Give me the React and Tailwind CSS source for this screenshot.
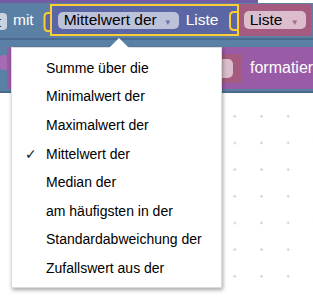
import React from "react";

const ITEMS = [
  "Summe über die",
  "Minimalwert der",
  "Maximalwert der",
  "Mittelwert der",
  "Median der",
  "am häufigsten in der",
  "Standardabweichung der",
  "Zufallswert aus der",
];
const SELECTED = 3;

function GridDots() {
  return (
    <svg className="absolute inset-0" width="313" height="298">
      <defs>
        <pattern id="dots" width="26.667" height="26.667" x="8.2" y="-3.7" patternUnits="userSpaceOnUse">
          <path d="M11.8 13.3h3M13.3 11.8v3" stroke="#cfcfcf" strokeWidth="1" />
        </pattern>
      </defs>
      <rect width="313" height="298" fill="url(#dots)" />
    </svg>
  );
}

function Arrow({ color }) {
  return <span className="text-[8px] leading-none" style={{ color }}>▼</span>;
}

export default function App() {
  return (
    <div className="relative w-[313px] h-[298px] overflow-hidden bg-white font-['Liberation_Sans',Arial,sans-serif]">
      <GridDots />

      <div className="relative">
        {/* top strip */}
        <div className="flex h-[3px]">
          <div className="w-[258px] bg-[#745ba5]" />
        </div>

        <div className="bg-[#5b80a5]">
          {/* row 1 */}
          <div className="flex items-start h-[35px]">
            <div className="mt-[10px] w-[7px] h-[17px] bg-[#c8d3df] rounded-r-[4px] overflow-hidden flex text-[15px] leading-[17px] text-[#2a3b5a]">
              <span className="-ml-[3px]">t</span>
            </div>
            <span className="ml-[6px] mt-[7px] text-[15.5px] leading-[20px] text-white">mit</span>

            {/* math block with yellow outline */}
            <div className="relative ml-[9px] mt-[1px] flex">
              <svg width="8" height="20" className="mt-[8px] -mr-[1px]">
                <path d="M8 1H5Q1.5 1 1.5 5v10Q1.5 19 5 19h3" fill="#5b67a5" stroke="#fc3" strokeWidth="2" />
              </svg>
              <div className="w-[189px] h-[32px] border-2 border-[#fc3] bg-[#5b67a5] flex items-center pl-[6px]">
                <div className="w-[121px] h-[17px] rounded-[5px] bg-[#bdc2db] flex items-center pl-[6px] pr-[7px] text-[15.5px] text-black leading-none">
                  <span>Mittelwert der</span>
                  <span className="ml-auto"><Arrow color="#6c74a8" /></span>
                </div>
                <span className="ml-[7px] text-[15.5px] text-white leading-none">Liste</span>
                <svg width="9" height="20" className="ml-auto mt-[2px]">
                  <path d="M9 1H6Q2 1 2 5v10Q2 19 6 19h3" fill="none" stroke="#fc3" strokeWidth="2" />
                </svg>
              </div>
            </div>

            {/* variable block */}
            <div className="mt-[1px] w-[72px] h-[32px] bg-[#a55b80] flex items-center pl-[5px]">
              <div className="w-[62px] h-[18px] rounded-[5px] bg-[#dbbdcc] flex items-center pl-[6px] pr-[7px] text-[15.5px] text-black leading-none">
                <span>Liste</span>
                <span className="ml-auto"><Arrow color="#a66b88" /></span>
              </div>
            </div>
          </div>

          <div className="h-[2px] bg-[#4b6b8e]" />
          <div className="h-[7px]" />

          {/* row 2: procedure block */}
          <div className="flex h-[42px]">
            <div className="w-[7px] flex items-start">
              <div className="mt-[8px] w-[7px] h-[15px] bg-[#a66cb3] rounded-l-[3px]" />
            </div>
            <div className="flex-1 bg-[#995ba5] flex items-center overflow-hidden">
              <div className="ml-[173px] shrink-0 w-[61px] h-[29px] bg-[#a55b80] flex items-center pl-[5px]">
                <div className="w-[48px] h-[19px] rounded-[5px] bg-[#dbbdcc]" />
              </div>
              <span className="ml-[9px] whitespace-nowrap text-[16px] text-white leading-none">formatier</span>
            </div>
          </div>

          <div className="h-[2px]" />
          <div className="h-[2px] bg-[#4b6b8e]" />
        </div>
      </div>

      {/* dropdown menu */}
      <div className="absolute left-[11px] top-[47px] w-[211px] h-[241px] bg-white border border-[#dcdcdc] shadow-[1px_2px_4px_rgba(0,0,0,0.35)] pt-[6px]">
        <div className="absolute -top-[10px] left-[97px] w-0 h-0 border-l-[10px] border-r-[10px] border-b-[10px] border-l-transparent border-r-transparent border-b-white" />
        {ITEMS.map((label, i) => (
          <div key={label} className="relative h-[28.6px] flex items-center pl-[34px] text-[14px] text-black">
            {i === SELECTED && (
              <span className="absolute left-[13px] text-[14px] font-['DejaVu_Sans',sans-serif] text-[#222]">✓</span>
            )}
            {label}
          </div>
        ))}
      </div>
    </div>
  );
}
